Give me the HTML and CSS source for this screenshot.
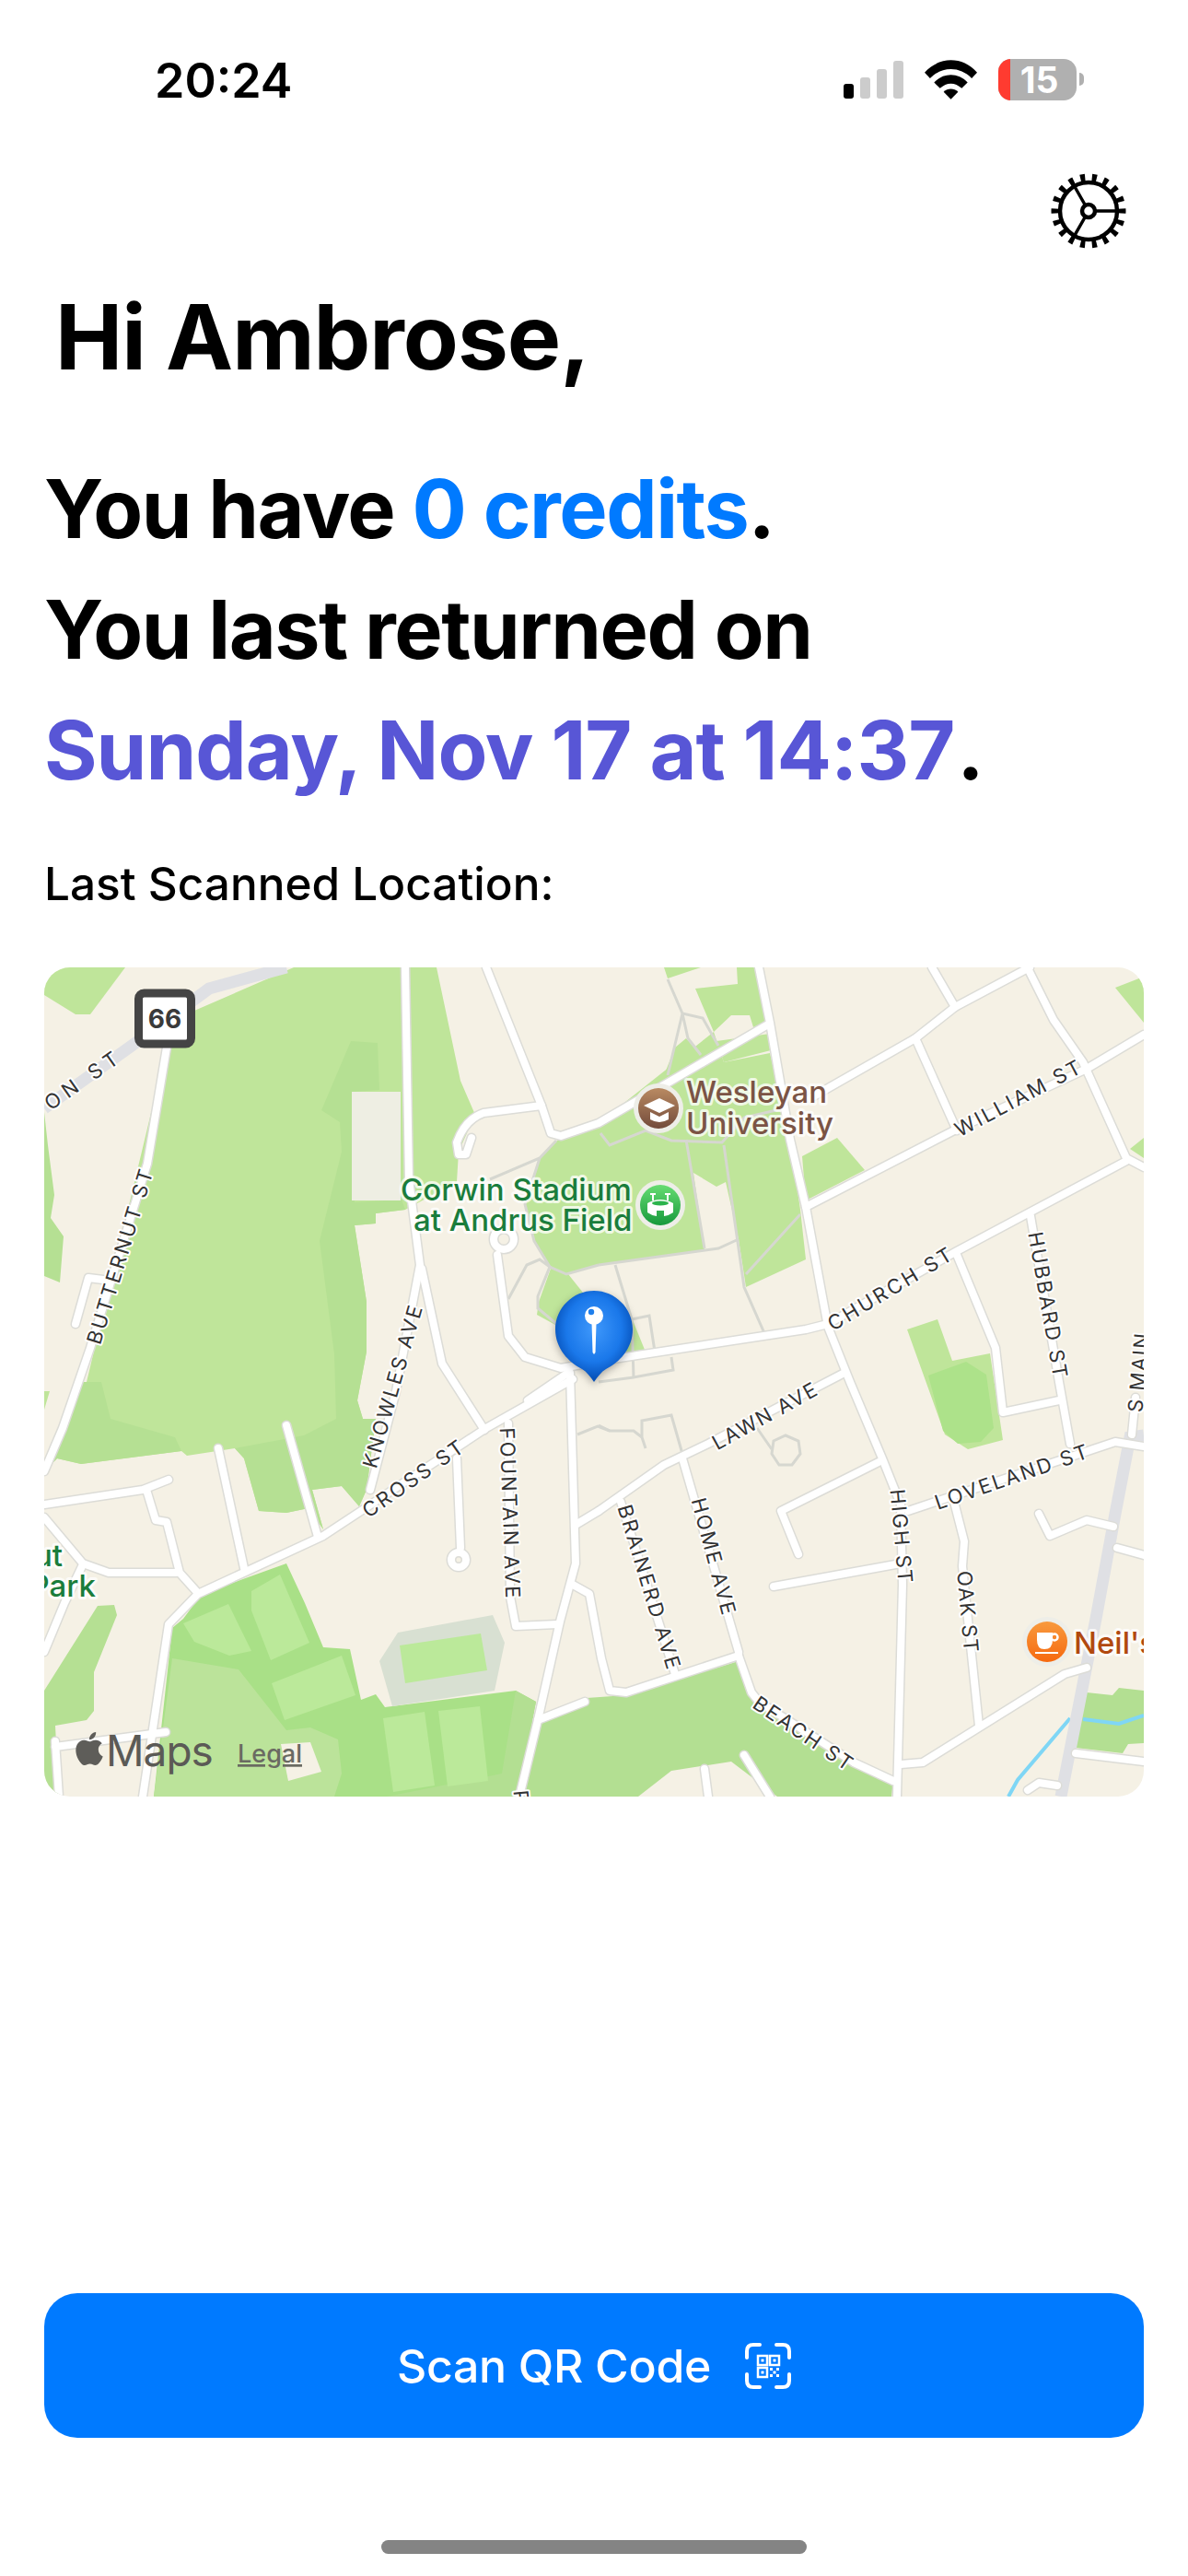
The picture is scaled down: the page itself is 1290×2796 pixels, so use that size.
FILE: index.html
```
<!DOCTYPE html>
<html lang="en">
<head>
<meta charset="UTF-8" />
<meta name="viewport" content="width=device-width, initial-scale=1" />
<title>Home</title>
<link rel="stylesheet" href="styles.css">
</head>
<body>
<div class="screen">

  <div class="status-bar">
    <div class="status-time">20:24</div>
    <div class="status-icons">
      <div class="signal">
        <span class="bar bar-1"></span>
        <span class="bar bar-2"></span>
        <span class="bar bar-3"></span>
        <span class="bar bar-4"></span>
      </div>
      <svg class="wifi" viewBox="0 0 58 43">
        <path d="M0 13.5 C16 -4.500 42 -4.500 58 13.500 L52 20 C39 6.500 19 6.500 6 20 Z" />
        <path d="M10.500 24.500 C21 13.500 37 13.500 47.500 24.500 L41 31 C33.500 24 24.500 24 17 31 Z" />
        <path d="M21 35 C25.500 30.500 32.500 30.500 37 35 L29 43 Z" />
      </svg>
      <div class="battery">
        <span class="battery-low"></span>
        <span class="battery-num">15</span>
      </div>
      <span class="battery-nub"></span>
    </div>
  </div>

  <div class="settings-row">
    <svg class="gear" viewBox="0 0 84 84">
      <circle class="gear-teeth" cx="42" cy="42" r="36" pathLength="18" />
      <circle class="gear-ring" cx="42" cy="42" r="31" />
      <path class="gear-spoke" d="M50 42 H74 M38 49 L26 70 M38 35 L26 14" />
      <circle class="gear-hub" cx="42" cy="42" r="7" />
    </svg>
  </div>

  <h1 class="greeting">Hi Ambrose,</h1>

  <p class="summary">You have <span class="credits">0 credits</span>.</p>
  <p class="summary">You last returned on</p>
  <p class="summary"><span class="return-date">Sunday, Nov 17 at 14:37</span>.</p>

  <p class="map-title">Last Scanned Location:</p>

  <div class="map">
    <svg class="map-svg" viewBox="48 1050 1194 900">
      <defs>
        <radialGradient id="pinFill" cx="50%" cy="42%" r="55%">
          <stop offset="0" stop-color="#3f98fb" />
          <stop offset="0.65" stop-color="#1a78ea" />
          <stop offset="1" stop-color="#0650b8" />
        </radialGradient>
        <linearGradient id="uniFill" x1="0" y1="0" x2="0" y2="1">
          <stop offset="0" stop-color="#b98a62" />
          <stop offset="1" stop-color="#734b3b" />
        </linearGradient>
        <linearGradient id="stadiumFill" x1="0" y1="0" x2="0" y2="1">
          <stop offset="0" stop-color="#66dc72" />
          <stop offset="1" stop-color="#17993c" />
        </linearGradient>
        <linearGradient id="cafeFill" x1="0" y1="0" x2="0" y2="1">
          <stop offset="0" stop-color="#f89a3e" />
          <stop offset="1" stop-color="#f6690f" />
        </linearGradient>

        <g id="roads">
          <path d="M181 1137 L160 1263 L98 1463 L68 1550 L48 1597" />
          <path d="M82 1437 L96 1387 L120 1390" />
          <path d="M440 1050 L444 1280 L456 1373 L430 1510 L402 1617" />
          <path d="M458 1377 L480 1480 L526 1552" />
          <path d="M528 1050 L588 1200 L598 1230 L609 1233 L650 1219 L834 1112" />
          <path d="M588 1200 L525 1208 Q505 1215 496 1240 L498 1253 L506 1253 L512 1235" />
          <path d="M824 1050 L836 1110 L858 1237 L875 1310 L899 1440 L923 1500 L958 1583 L978 1633 L980 1720 L974 1950" />
          <path d="M875 1310 L1036 1227 L1180 1160 L1242 1123" />
          <path d="M880 1192 L994 1127 L1037 1093 L1118 1050" />
          <path d="M994 1127 L1039 1227" />
          <path d="M1012 1050 L1037 1093" />
          <path d="M1117 1053 L1144 1107 L1176 1153 L1223 1257 L1242 1267" />
          <path d="M666 1475 L875 1443 L899 1437 L1039 1358 L1223 1260" />
          <path d="M1039 1362 L1081 1463 L1089 1533 L1150 1520" />
          <path d="M1119 1320 L1150 1500 L1162 1567" />
          <path d="M650 1640 L721 1590 L769 1567 L917 1490" />
          <path d="M625 1655 L650 1640" />
          <path d="M619 1490 L625 1697 L608 1760 L584 1867 L564 1950" />
          <path d="M622 1497 L528 1550 L392 1640 L351 1667 L215 1730 L183 1763 L155 1950" />
          <path d="M622 1720 L640 1730 L653 1800 L662 1835 L680 1837 L802 1797" />
          <path d="M552 1545 L554 1733 L560 1765 L605 1763" />
          <path d="M496 1583 L500 1680" />
          <path d="M584 1867 L635 1847" />
          <path d="M311 1547 L345 1668" />
          <path d="M237 1572 L265 1702" />
          <path d="M48 1633 L155 1617 L183 1606" />
          <path d="M159 1617 L169 1650 L181 1652 L195 1707 L213 1727" />
          <path d="M48 1647 L90 1697 L118 1707 L191 1707" />
          <path d="M90 1698 L70 1740 L48 1793" />
          <path d="M802 1797 L816 1837 L824 1847 L927 1913 L970 1933" />
          <path d="M741 1583 L802 1793" />
          <path d="M674 1630 L733 1817" />
          <path d="M954 1587 L848 1640 L867 1687" />
          <path d="M840 1722 L978 1697" />
          <path d="M986 1640 L1211 1565 L1242 1570" />
          <path d="M1036 1630 L1047 1673 L1045 1700 L1063 1873" />
          <path d="M978 1915 L1002 1913 L1156 1817 L1180 1810" />
          <path d="M1128 1643 L1140 1667 L1180 1650 L1209 1657" />
          <path d="M1213 1680 L1242 1688" />
          <path d="M1168 1903 L1242 1912" />
          <path d="M1116 1943 L1128 1935 L1148 1938" />
          <path d="M808 1905 L836 1950" />
          <path d="M765 1920 L769 1950" />
          <path d="M1233 1517 L1229 1557" />
          <path d="M540 1362 L552 1450 L570 1473 L609 1485 L666 1475" />
          <path d="M573 1520 L617 1490" />
          <path d="M64 1950 L60 1890 M60 1896 L180 1880" />
          <circle cx="547" cy="1345" r="11" />
          <circle cx="498" cy="1693" r="8" />
        </g>
      </defs>

      <rect class="ground" x="48" y="1050" width="1194" height="900" />

      <!-- parks -->
      <polygon class="park" points="48,1050 136,1050 98,1101 82,1101 48,1080" />
      <polygon class="park" points="319,1050 474,1050 500,1173 516,1210 498,1250 496,1283 440,1313 408,1317 408,1328 385,1330 398,1413 398,1467 388,1520 394,1540 408,1540 398,1617 390,1635 371,1613 339,1617 351,1660 335,1637 311,1642 281,1640 265,1583 255,1572 203,1580 197,1575 88,1589 62,1583 48,1597 94,1500 181,1137 211,1097" />
      <polygon class="park-dark" points="381,1130 410,1132 412,1183 383,1185 385,1305 436,1302 440,1313 408,1317 408,1328 385,1330 398,1413 398,1467 388,1520 394,1540 408,1540 398,1617 390,1635 371,1613 339,1617 351,1660 335,1637 311,1642 281,1640 265,1583 255,1572 330,1558 365,1540 363,1470 347,1347 371,1250 369,1218 349,1205" />
      <polygon class="park-dark" points="48,1597 68,1550 90,1500 110,1500 120,1540 190,1560 197,1575 88,1589 62,1583" />
      <polygon class="park-dark" points="48,1207 52,1243 59,1297 55,1322 69,1342 65,1392 48,1385" />
      <polygon class="park-dark" points="106,1743 124,1742 127,1753 102,1815 102,1857 94,1867 60,1873 64,1950 48,1950 48,1835" />
      <polygon class="park" points="48,1510 54,1510 48,1530" />

      <polygon class="field-base" points="199,1757 219,1730 311,1697 331,1740 351,1788 380,1790 392,1845 408,1839 418,1853 560,1835 582,1847 560,1950 167,1950 187,1767" />
      <polygon class="park-soft" points="187,1800 259,1812 311,1878 337,1875 367,1888 371,1925 363,1950 167,1950" />
      <polygon class="park-mid" points="560,1835 582,1847 564,1950 420,1950 545,1925" />
      <polygon class="field" points="199,1762 248,1741 273,1792 249,1797 211,1782" />
      <polygon class="field" points="273,1727 304,1709 336,1783 294,1802 273,1748" />
      <polygon class="field" points="295,1827 371,1797 386,1840 309,1867" />
      <polygon class="field" points="416,1865 461,1858 472,1938 427,1945" />
      <polygon class="field" points="476,1857 521,1852 530,1933 486,1939" />
      <polygon class="ground" points="305,1893 337,1891 349,1923 313,1933" />
      <polygon class="stadium" points="432,1772 535,1753 548,1783 537,1835 426,1852 412,1803" />
      <polygon class="field" points="434,1786 522,1773 529,1813 440,1827" />

      <polygon class="park-mid" points="560,1950 584,1867 637,1843 680,1840 802,1803 816,1840 927,1913 970,1933 968,1950" />
      <polygon class="ground" points="729,1922 794,1912 844,1950 693,1950" />

      <polygon class="park" points="605,1238 586,1257 570,1307 580,1347 597,1375 615,1383 650,1373 765,1357 753,1273 778,1288 788,1283 802,1345 810,1397 875,1367 869,1313 858,1237 850,1200 836,1143 786,1153 775,1120 650,1219" />
      <polygon class="park" points="598,1377 617,1383 633,1403 660,1430 640,1445 603,1438 583,1427 585,1413" />
      <polygon class="park" points="680,1430 687,1433 700,1465 680,1468" />
      <polygon class="park" points="871,1255 909,1235 939,1270 875,1303" />
      <polygon class="park" points="721,1050 761,1050 725,1062" />
      <polygon class="park" points="800,1050 801,1068 755,1073 775,1120 794,1102 814,1102 818,1115 834,1108 824,1050" />
      <polygon class="park" points="733,1137 745,1127 761,1145 721,1167" />
      <polygon class="park" points="836,1122 837,1140 786,1153 778,1130" />
      <polygon class="park" points="1211,1072 1242,1060 1242,1110" />
      <polygon class="park" points="1227,1247 1242,1235 1242,1257" />
      <polygon class="park" points="985,1443 1018,1432 1034,1477 1075,1469 1089,1563 1051,1573 1026,1557" />
      <polygon class="park-bright" points="1008,1493 1049,1478 1071,1492 1079,1550 1065,1565 1040,1567 1024,1553" />
      <polygon class="park-mid" points="1180,1837 1208,1840 1215,1832 1242,1835 1242,1892 1225,1893 1219,1903 1168,1897" />
      <rect class="plaza" x="382" y="1185" width="53" height="118" />

      <!-- paths on campus -->
      <g class="walkways">
        <path d="M725 1063 L741 1100 L763 1105 L780 1135 M741 1100 L725 1167 M741 1100 L747 1127 L761 1145" />
        <path d="M745 1237 L765 1355 M786 1243 L808 1397 L830 1447 M810 1383 L869 1318" />
        <path d="M650 1373 L780 1355 L802 1345 M668 1373 L686 1432 L705 1428 L711 1467 M686 1432 L688 1495 L731 1487 L729 1473 M650 1500 L688 1495" />
        <path d="M652 1230 L662 1243 L701 1227 L729 1238 L784 1240 L808 1213 L856 1202" />
        <path d="M532 1280 L586 1257 L604 1238 M586 1257 L570 1307 L580 1347 L597 1375 L615 1383 L650 1373" />
        <path d="M552 1410 L572 1373 L586 1367 L597 1375 L584 1407 L584 1420 L608 1440" />
        <path d="M650 1547 L662 1553 L688 1553 L697 1560 L701 1572 M697 1560 L697 1542 L729 1536 L741 1578" />
        <path d="M627 1557 L649 1548 L662 1553 M822 1550 L838 1573" />
        <polygon points="853,1558 867,1564 869,1578 860,1590 846,1590 838,1578 840,1564" />
      </g>

      <!-- water and highways -->
      <path class="water" d="M1095 1950 L1105 1932 L1162 1865 M1176 1866 L1215 1871 L1242 1862" />
      <path class="highway" d="M48 1203 L150 1130 L227 1073 L311 1050" />
      <path class="highway" d="M1242 1558 L1227 1560 L1211 1643 L1190 1757 L1152 1950" />

      <use href="#roads" class="road-edge" />
      <use href="#roads" class="road-top" />

      <!-- street names -->
      <g class="street-names">
        <text transform="translate(88,1173) rotate(-35)" textLength="92">ON ST</text>
        <text transform="translate(130,1364) rotate(-73)" textLength="197">BUTTERNUT ST</text>
        <text transform="translate(426,1505) rotate(-74)" textLength="182">KNOWLES AVE</text>
        <text transform="translate(448,1605) rotate(-35)" textLength="128">CROSS ST</text>
        <text transform="translate(554,1642) rotate(88)" textLength="185">FOUNTAIN AVE</text>
        <text transform="translate(705,1722) rotate(73)" textLength="185">BRAINERD AVE</text>
        <text transform="translate(775,1689) rotate(75)" textLength="130">HOME AVE</text>
        <text transform="translate(830,1537) rotate(-29)" textLength="126">LAWN AVE</text>
        <text transform="translate(979,1667) rotate(85)" textLength="102">HIGH ST</text>
        <text transform="translate(1098,1603) rotate(-19)" textLength="174">LOVELAND ST</text>
        <text transform="translate(1051,1749) rotate(85)" textLength="88">OAK ST</text>
        <text transform="translate(872,1881) rotate(34)" textLength="125">BEACH ST</text>
        <text transform="translate(966,1399) rotate(-31)" textLength="153">CHURCH ST</text>
        <text transform="translate(1105,1192) rotate(-28)" textLength="151">WILLIAM ST</text>
        <text transform="translate(1138,1416) rotate(80)" textLength="160">HUBBARD ST</text>
        <text transform="translate(1236,1490) rotate(-85)" textLength="86">S MAIN</text>
        <text transform="translate(566,1950) rotate(85)">P</text>
      </g>

      <!-- route shield -->
      <rect class="shield" x="150.500" y="1078" width="57" height="55" rx="6" />
      <text class="shield-num" x="179" y="1116">66</text>

      <!-- places -->
      <text class="poi poi-green" x="435" y="1303">Corwin Stadium</text>
      <text class="poi poi-green" x="449" y="1336">at Andrus Field</text>
      <text class="poi poi-brown" x="745" y="1197">Wesleyan</text>
      <text class="poi poi-brown" x="745" y="1231">University</text>
      <text class="poi poi-green poi-end" x="68" y="1700">ut</text>
      <text class="poi poi-green poi-end" x="104" y="1733">Park</text>
      <text class="poi poi-orange" x="1166" y="1795">Neil's</text>

      <!-- university badge -->
      <circle class="poi-halo" cx="715" cy="1203" r="27" />
      <circle cx="715" cy="1203" r="22" fill="url(#uniFill)" />
      <path class="glyph" d="M699 1200 L716 1192 L733 1200 L716 1208 Z M706 1207 V1215 Q716 1221 726 1215 V1207 L716 1212 Z" />

      <!-- stadium badge -->
      <circle class="poi-halo" cx="717" cy="1308" r="27" />
      <circle cx="717" cy="1308" r="22" fill="url(#stadiumFill)" />
      <path class="glyph" d="M706 1295 h6 v2 h-6 Z M722 1295 h6 v2 h-6 Z M708 1297 h2 v6 h-2 Z M724 1297 h2 v6 h-2 Z" />
      <path class="glyph" d="M703 1306 Q717 1298 731 1306 V1316 Q727 1319 721 1320 V1314 H713 V1320 Q707 1319 703 1316 Z" />
      <ellipse cx="717" cy="1306" rx="9" ry="2.500" fill="#2bb34c" />

      <!-- cafe badge -->
      <circle class="poi-halo" cx="1137" cy="1782" r="27" />
      <circle cx="1137" cy="1782" r="22" fill="url(#cafeFill)" />
      <path class="glyph" d="M1126 1772 H1143 V1780 Q1143 1790 1134 1790 Q1126 1790 1126 1780 Z" />
      <circle class="cup-handle" cx="1145" cy="1777" r="3.500" />
      <rect class="glyph" x="1124" y="1793" width="25" height="2" />

      <!-- selected pin -->
      <g class="pin">
        <path fill="url(#pinFill)" d="M645 1401 C668 1401 687 1420 687 1443 C687 1464 672 1479 658 1486 C653 1489 649 1494 645 1500 C641 1494 637 1489 632 1486 C618 1479 603 1464 603 1443 C603 1420 622 1401 645 1401 Z" />
        <path class="glyph" d="M642.500 1436 H647.500 L646.500 1468 L645 1470 L643.500 1468 Z" />
        <circle class="glyph" cx="645" cy="1428" r="10" />
        <circle cx="642" cy="1424" r="3.200" fill="#1f7fec" />
      </g>

      <!-- attribution -->
      <path class="apple" transform="translate(79,1880) scale(1.5)" d="M12.152 6.896c-.948 0-2.415-1.078-3.960-1.040-2.040.027-3.910 1.183-4.961 3.014-2.117 3.675-.546 9.103 1.519 12.090 1.013 1.454 2.208 3.090 3.792 3.039 1.520-.065 2.090-.987 3.935-.987 1.831 0 2.350.987 3.960.948 1.637-.026 2.676-1.480 3.676-2.948 1.156-1.688 1.636-3.325 1.662-3.415-.039-.013-3.182-1.221-3.220-4.857-.026-3.040 2.480-4.494 2.597-4.559-1.429-2.090-3.623-2.324-4.390-2.376-2-.156-3.675 1.090-4.610 1.090zM15.530 3.830c.843-1.012 1.400-2.427 1.245-3.830-1.207.052-2.662.805-3.532 1.818-.780.896-1.454 2.338-1.273 3.714 1.338.104 2.715-.688 3.559-1.701" />
      <text class="maps-word" x="115" y="1917">Maps</text>
      <text class="legal" x="258" y="1913">Legal</text>
    </svg>
  </div>

  <div class="spacer"></div>

  <button class="scan-btn">
    <span>Scan QR Code</span>
    <svg class="qr-icon" viewBox="0 0 50 50">
      <path class="qr-frame" d="M16 2 H9 Q2 2 2 9 V16 M34 2 H41 Q48 2 48 9 V16 M16 48 H9 Q2 48 2 41 V34 M34 48 H41 Q48 48 48 41 V34" />
      <g class="qr-cells">
        <path d="M14 14 h10 v10 h-10 Z M27 14 h10 v10 h-10 Z M14 27 h10 v10 h-10 Z" />
      </g>
      <path class="qr-dots" d="M17.500 17.500 h3 v3 h-3 Z M30.500 17.500 h3 v3 h-3 Z M17.500 30.500 h3 v3 h-3 Z M27 27 h3 v3 h-3 Z M34 27 h3 v3 h-3 Z M30.500 30.500 h3 v3 h-3 Z M27 34 h3 v3 h-3 Z M34 34 h3 v3 h-3 Z" />
    </svg>
  </button>

  <div class="home-bar"></div>
</div>
</body>
</html>
```
FILE: styles.css
```
* {
  margin: 0;
  padding: 0;
  box-sizing: border-box;
}
body {
  font-family: 'Inter', 'Liberation Sans', sans-serif;
  background: #fff;
  color: #000;
}
.screen {
  width: 1290px;
  height: 2796px;
  display: flex;
  flex-direction: column;
  overflow: hidden;
}

/* status bar */
.status-bar {
  display: flex;
  justify-content: space-between;
  align-items: flex-start;
  height: 187px;
  padding: 58px 0 0 168px;
}
.status-time {
  font-size: 52px;
  font-weight: 600;
  line-height: 60px;
}
.status-icons {
  display: flex;
  align-items: flex-start;
  padding: 6px 113px 0 0;
}
.signal {
  display: flex;
  align-items: flex-end;
  gap: 7px;
  height: 41px;
  margin: 2px 23px 0 0;
}
.bar {
  display: block;
  width: 11px;
  background: #ccc;
  border-radius: 3px;
}
.bar-1 { height: 16px; background: #000; }
.bar-2 { height: 23px; }
.bar-3 { height: 32px; }
.bar-4 { height: 41px; }
.wifi {
  display: block;
  width: 57px;
  height: 43px;
  margin: 1px 23px 0 0;
}
.battery {
  position: relative;
  width: 85px;
  height: 45px;
  background: #b0b0b0;
  border-radius: 14px;
  overflow: hidden;
}
.battery-low {
  display: block;
  width: 13px;
  height: 100%;
  background: #ff3b30;
}
.battery-num {
  position: absolute;
  top: 0;
  left: 13px;
  right: 9px;
  text-align: center;
  color: #fff;
  font-size: 39px;
  font-weight: 700;
  line-height: 45px;
}
.battery-nub {
  display: block;
  width: 5px;
  height: 14px;
  margin: 15px 0 0 3px;
  background: #b0b0b0;
  border-radius: 0 7px 7px 0;
}

/* settings */
.settings-row {
  display: flex;
  justify-content: flex-end;
  padding-right: 66px;
  height: 124px;
}
.gear {
  display: block;
  width: 84px;
  height: 84px;
  fill: none;
  stroke: #000;
}
.gear-teeth {
  stroke-width: 9;
  stroke-dasharray: 0.4 0.6;
  stroke-dashoffset: 0.2;
}
.gear-ring { stroke-width: 4.500; }
.gear-spoke { stroke-width: 3.500; }
.gear-hub {
  stroke-width: 4.500;
  fill: #fff;
}

/* text */
.greeting {
  font-size: 98px;
  font-weight: 700;
  line-height: 110px;
  padding-left: 60px;
  letter-spacing: -1px;
}
.summary {
  font-size: 88px;
  font-weight: 700;
  line-height: 131px;
  padding-left: 48px;
  letter-spacing: -1.5px;
}
.greeting + .summary { margin-top: 66px; }
.credits { color: #007aff; }
.return-date {
  color: #5856d6;
  letter-spacing: -1px;
  margin-right: 3px;
}
.map-title {
  font-size: 49.500px;
  font-weight: 500;
  line-height: 60px;
  padding-left: 48px;
  margin-top: 49px;
}

/* map */
.map {
  width: 1194px;
  height: 900px;
  margin: 61px 0 0 48px;
  border-radius: 28px;
  overflow: hidden;
}
.map-svg {
  display: block;
  width: 1194px;
  height: 900px;
}
.ground { fill: #f5f1e5; }
.park { fill: #bfe59a; }
.park-dark { fill: #b5e093; }
.park-mid { fill: #b3df92; }
.park-soft { fill: #bbe39a; }
.park-bright { fill: #ade28a; }
.field-base { fill: #a9e087; }
.field { fill: #bbe99a; }
.stadium { fill: #d8e0d2; }
.plaza { fill: #eeeee3; }
.walkways {
  fill: none;
  stroke: #d6d7d0;
  stroke-width: 3;
}
.water {
  fill: none;
  stroke: #7fd6f5;
  stroke-width: 4;
}
.highway {
  fill: none;
  stroke: #dfe0e4;
  stroke-width: 13;
}
.road-edge, .road-top {
  fill: none;
  stroke-linecap: round;
  stroke-linejoin: round;
}
.road-edge {
  stroke: #dcdcd7;
  stroke-width: 11;
}
.road-top {
  stroke: #fff;
  stroke-width: 8;
}
.street-names text {
  font-size: 22px;
  font-weight: 400;
  fill: #333;
  text-anchor: middle;
  dominant-baseline: central;
  stroke: #fff;
  stroke-width: 4px;
  stroke-linejoin: round;
  paint-order: stroke;
}
.shield {
  fill: #fff;
  stroke: #444;
  stroke-width: 9;
}
.shield-num {
  font-size: 28px;
  font-weight: 700;
  fill: #3a3a3a;
  text-anchor: middle;
}
.poi {
  font-size: 33px;
  font-weight: 500;
  stroke: rgba(255, 255, 255, 0.75);
  stroke-width: 6px;
  stroke-linejoin: round;
  paint-order: stroke;
}
.poi-green { fill: #1a7d3c; }
.poi-brown { fill: #7b5445; }
.poi-orange { fill: #b1490f; }
.poi-end { text-anchor: end; }
.poi-halo { fill: #eeeee8; }
.glyph { fill: #fff; }
.cup-handle {
  fill: none;
  stroke: #fff;
  stroke-width: 2.500;
}
.pin { filter: drop-shadow(0 3px 4px rgba(0, 0, 0, 0.3)); }
.apple { fill: #5e5d59; }
.maps-word {
  font-size: 46px;
  fill: #5b5a56;
  letter-spacing: -1px;
}
.legal {
  font-size: 27px;
  font-weight: 500;
  fill: #6a6a62;
  text-decoration: underline;
}

/* bottom */
.spacer { flex: 1; }
.scan-btn {
  display: flex;
  align-items: center;
  justify-content: center;
  gap: 37px;
  width: 1194px;
  height: 157px;
  margin-left: 48px;
  background: #007aff;
  color: #fff;
  border: none;
  border-radius: 36px;
  font-family: inherit;
  font-size: 50px;
  font-weight: 500;
  letter-spacing: -0.3px;
}
.qr-icon {
  display: block;
  width: 50px;
  height: 50px;
  fill: none;
  stroke: #fff;
}
.qr-frame {
  stroke-width: 4;
  stroke-linecap: round;
}
.qr-cells { stroke-width: 2.500; }
.qr-dots {
  fill: #fff;
  stroke: none;
}
.home-bar {
  width: 462px;
  height: 15px;
  margin: 111px 0 24px 414px;
  background: #848484;
  border-radius: 8px;
}
```
